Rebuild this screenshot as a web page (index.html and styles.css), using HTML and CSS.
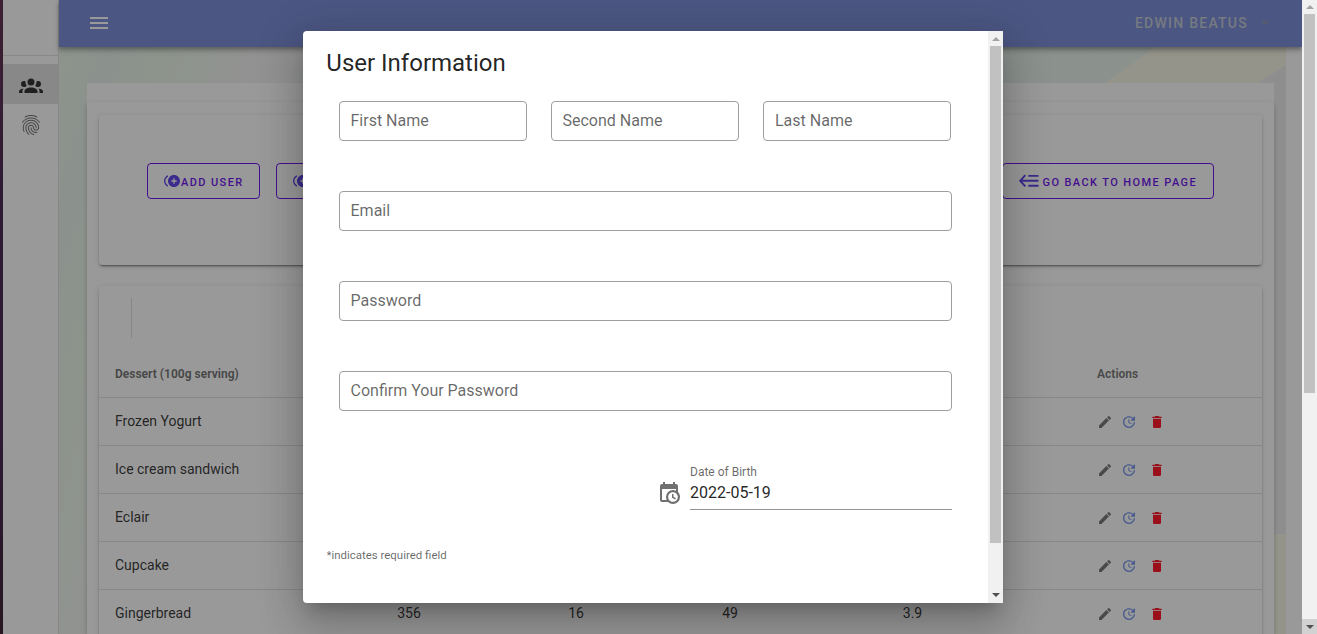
FILE: index.html
```html
<!DOCTYPE html>
<html lang="en">
<head>
<meta charset="utf-8">
<title>User Information</title>
<link rel="stylesheet" href="styles.css">
</head>
<body>
<svg class="defs" aria-hidden="true">
  <symbol id="menu" viewBox="0 0 24 24"><path d="M3,6H21V8H3V6M3,11H21V13H3V11M3,16H21V18H3V16Z"/></symbol>
  <symbol id="group" viewBox="0 0 24 24"><path d="M12,5.5A3.5,3.5 0 0,1 15.5,9A3.5,3.5 0 0,1 12,12.5A3.5,3.5 0 0,1 8.5,9A3.5,3.5 0 0,1 12,5.5M5,8C5.56,8 6.08,8.15 6.53,8.42C6.38,9.85 6.8,11.27 7.66,12.38C7.16,13.34 6.16,14 5,14A3,3 0 0,1 2,11A3,3 0 0,1 5,8M19,8A3,3 0 0,1 22,11A3,3 0 0,1 19,14C17.84,14 16.84,13.34 16.34,12.38C17.2,11.27 17.62,9.85 17.47,8.42C17.92,8.15 18.44,8 19,8M5.5,18.25C5.5,16.18 8.41,14.5 12,14.5C15.59,14.5 18.5,16.18 18.5,18.25V20H5.5V18.25M0,20V18.5C0,17.11 1.89,15.94 4.45,15.6C3.86,16.28 3.5,17.22 3.5,18.25V20H0M24,20H20.5V18.25C20.5,17.22 20.14,16.28 19.55,15.6C22.11,15.94 24,17.11 24,18.5V20Z"/></symbol>
  <symbol id="finger" viewBox="0 0 24 24"><path d="M17.81,4.47C17.73,4.47 17.65,4.45 17.58,4.41C15.66,3.42 14,3 12,3C10.03,3 8.15,3.47 6.44,4.41C6.2,4.54 5.9,4.45 5.76,4.21C5.63,3.97 5.72,3.66 5.96,3.53C7.82,2.5 9.86,2 12,2C14.14,2 16,2.47 18.04,3.5C18.29,3.65 18.38,3.95 18.25,4.19C18.16,4.37 18,4.47 17.81,4.47M3.5,9.72C3.4,9.72 3.3,9.69 3.21,9.63C3,9.47 2.93,9.16 3.09,8.93C4.08,7.53 5.34,6.43 6.84,5.66C10,4.04 14,4.03 17.15,5.65C18.65,6.42 19.91,7.5 20.9,8.9C21.06,9.12 21,9.44 20.78,9.6C20.55,9.76 20.24,9.71 20.08,9.5C19.18,8.22 18.04,7.23 16.69,6.54C13.82,5.07 10.15,5.07 7.29,6.55C5.93,7.25 4.79,8.25 3.89,9.5C3.81,9.65 3.66,9.72 3.5,9.72M9.75,21.79C9.62,21.79 9.5,21.74 9.4,21.64C8.53,20.77 8.06,20.21 7.39,19C6.7,17.77 6.34,16.27 6.34,14.66C6.34,11.69 8.88,9.27 12,9.27C15.12,9.27 17.66,11.69 17.66,14.66A0.5,0.5 0 0,1 17.16,15.16A0.5,0.5 0 0,1 16.66,14.66C16.66,12.24 14.57,10.27 12,10.27C9.43,10.27 7.34,12.24 7.34,14.66C7.34,16.1 7.66,17.43 8.27,18.5C8.91,19.66 9.35,20.15 10.12,20.93C10.31,21.13 10.31,21.44 10.12,21.64C10,21.74 9.88,21.79 9.75,21.79M16.92,19.94C15.73,19.94 14.68,19.64 13.82,19.05C12.33,18.04 11.44,16.4 11.44,14.66A0.5,0.5 0 0,1 11.94,14.16A0.5,0.5 0 0,1 12.44,14.66C12.44,16.07 13.16,17.4 14.38,18.22C15.09,18.7 15.92,18.93 16.92,18.93C17.16,18.93 17.56,18.9 17.96,18.83C18.23,18.78 18.5,18.96 18.54,19.24C18.59,19.5 18.41,19.77 18.13,19.82C17.56,19.93 17.06,19.94 16.92,19.94M14.91,22C14.87,22 14.82,22 14.78,22C13.19,21.54 12.15,20.95 11.06,19.88C9.66,18.5 8.89,16.64 8.89,14.66C8.89,13.04 10.27,11.72 11.97,11.72C13.67,11.72 15.05,13.04 15.05,14.66C15.05,15.73 16,16.6 17.13,16.6C18.28,16.6 19.21,15.73 19.21,14.66C19.21,10.89 15.96,7.83 11.96,7.83C9.12,7.83 6.5,9.41 5.35,11.86C4.96,12.67 4.76,13.62 4.76,14.66C4.76,15.44 4.83,16.67 5.43,18.27C5.53,18.53 5.4,18.82 5.14,18.91C4.88,19 4.59,18.87 4.5,18.62C4,17.31 3.77,16 3.77,14.66C3.77,13.46 4,12.37 4.45,11.42C5.78,8.63 8.73,6.82 11.96,6.82C16.5,6.82 20.21,10.33 20.21,14.65C20.21,16.27 18.83,17.59 17.13,17.59C15.43,17.59 14.05,16.27 14.05,14.65C14.05,13.58 13.12,12.71 11.97,12.71C10.82,12.71 9.89,13.58 9.89,14.65C9.89,16.36 10.55,17.96 11.76,19.16C12.71,20.1 13.62,20.62 15.03,21C15.3,21.08 15.45,21.36 15.38,21.62C15.33,21.85 15.12,22 14.91,22Z"/></symbol>
  <symbol id="pencil" viewBox="0 0 24 24"><path d="M20.71,7.04C21.1,6.65 21.1,6 20.71,5.63L18.37,3.29C18,2.9 17.35,2.9 16.96,3.29L15.12,5.12L18.87,8.87M3,17.25V21H6.75L17.81,9.93L14.06,6.18L3,17.25Z"/></symbol>
  <symbol id="update" viewBox="0 0 24 24"><path d="M21,10.12H14.22L16.96,7.3C14.23,4.6 9.81,4.5 7.08,7.2C4.35,9.91 4.35,14.28 7.08,17C9.81,19.7 14.23,19.7 16.96,17C18.32,15.65 19,14.08 19,12.1H21C21,14.08 20.12,16.65 18.36,18.39C14.85,21.87 9.15,21.87 5.64,18.39C2.14,14.92 2.11,9.28 5.62,5.81C9.13,2.34 14.76,2.34 18.27,5.81L21,3V10.12M12.5,8V12.25L16,14.33L15.28,15.54L11,13V8H12.5Z"/></symbol>
  <symbol id="delete" viewBox="0 0 24 24"><path d="M19,4H15.5L14.5,3H9.5L8.5,4H5V6H19M6,19A2,2 0 0,0 8,21H16A2,2 0 0,0 18,19V7H6V19Z"/></symbol>
  <symbol id="calendar" viewBox="0 0 24 24"><path d="M15,13H16.5V15.82L18.94,17.23L18.19,18.53L15,16.69V13M19,8H5V19H9.67C9.24,18.09 9,17.07 9,16A7,7 0 0,1 16,9C17.07,9 18.09,9.24 19,9.67V8M5,21C3.89,21 3,20.1 3,19V5C3,3.89 3.89,3 5,3H6V1H8V3H16V1H18V3H19A2,2 0 0,1 21,5V11.1C22.24,12.36 23,14.09 23,16A7,7 0 0,1 16,23C14.09,23 12.36,22.24 11.1,21H5M16,11.15A4.85,4.85 0 0,0 11.15,16C11.15,18.68 13.32,20.85 16,20.85A4.85,4.85 0 0,0 20.85,16C20.85,13.32 18.68,11.15 16,11.15Z"/></symbol>
  <symbol id="plus" viewBox="0 0 24 24"><path fill-rule="evenodd" d="M16,8H14V11H11V13H14V16H16V13H19V11H16V8ZM2,12C2,9.21 3.64,6.8 6,5.68V3.5C2.5,4.76 0,8.09 0,12C0,15.91 2.5,19.24 6,20.5V18.32C3.64,17.2 2,14.79 2,12ZM15,3C10.04,3 6,7.04 6,12C6,16.96 10.04,21 15,21C19.96,21 24,16.96 24,12C24,7.04 19.96,3 15,3Z"/></symbol>
  <symbol id="back" viewBox="0 0 20 14"><path d="M6.3 1.2L1.2 6.8L6.3 12.4M1.2 6.8H19.5M9.3 1.9H19.5M9.3 11.7H19.5" fill="none" stroke="currentColor" stroke-width="1.9"/></symbol>
</svg>

<div class="window">
  <div class="edge"></div>
  <nav class="drawer">
    <div class="drawer-head"></div>
    <div class="drawer-item active"><svg class="i24"><use href="#group"/></svg></div>
    <div class="drawer-item"><svg class="i24"><use href="#finger"/></svg></div>
  </nav>
  <div class="main">
    <header class="appbar">
      <svg class="i24"><use href="#menu"/></svg>
      <div class="account">Edwin Beatus<span class="caret"></span></div>
    </header>
    <div class="content">
      <svg class="backdrop" viewBox="0 0 1227 587" preserveAspectRatio="none">
        <path d="M1097 0H1227V587H1000V64L1040 40Z" fill="#f5f6e5"/>
        <path d="M1227 18L1185 45V487H1227Z" fill="#ebebeb"/>
      </svg>
      <div class="sheet">
        <div class="panel">
          <section class="card toolbar">
            <div class="buttons">
              <button class="btn"><svg class="i16"><use href="#plus"/></svg>Add User</button>
              <button class="btn second"><svg class="i16"><use href="#plus"/></svg></button>
            </div>
            <button class="btn home"><svg class="i-back"><use href="#back"/></svg>Go back to home page</button>
          </section>
          <section class="card data">
            <div class="data-top"><span class="vline"></span></div>
            <div class="row head"><span class="name">Dessert (100g serving)</span><span class="act">Actions</span></div>
            <div class="row"><span class="name">Frozen Yogurt</span><span class="act"><svg class="i16"><use href="#pencil"/></svg><svg class="i16 upd"><use href="#update"/></svg><svg class="i16 del"><use href="#delete"/></svg></span></div>
            <div class="row"><span class="name">Ice cream sandwich</span><span class="act"><svg class="i16"><use href="#pencil"/></svg><svg class="i16 upd"><use href="#update"/></svg><svg class="i16 del"><use href="#delete"/></svg></span></div>
            <div class="row"><span class="name">Eclair</span><span class="act"><svg class="i16"><use href="#pencil"/></svg><svg class="i16 upd"><use href="#update"/></svg><svg class="i16 del"><use href="#delete"/></svg></span></div>
            <div class="row"><span class="name">Cupcake</span><span class="act"><svg class="i16"><use href="#pencil"/></svg><svg class="i16 upd"><use href="#update"/></svg><svg class="i16 del"><use href="#delete"/></svg></span></div>
            <div class="row"><span class="name">Gingerbread</span><span>356</span><span>16</span><span>49</span><span>3.9</span><span class="act"><svg class="i16"><use href="#pencil"/></svg><svg class="i16 upd"><use href="#update"/></svg><svg class="i16 del"><use href="#delete"/></svg></span></div>
          </section>
        </div>
      </div>
    </div>
  </div>
  <div class="scroll page-scroll"><span class="cap"><i class="up"></i></span><span class="thumb"></span><span class="cap hot"><i class="down"></i></span></div>

  <div class="scrim"></div>
  <div class="dialog">
    <div class="form">
      <h1 class="title">User Information</h1>
      <div class="names">
        <div class="field">First Name</div>
        <div class="field">Second Name</div>
        <div class="field last">Last Name</div>
      </div>
      <div class="field wide">Email</div>
      <div class="field wide">Password</div>
      <div class="field wide">Confirm Your Password</div>
      <div class="birth">
        <svg class="i24"><use href="#calendar"/></svg>
        <div class="date"><label class="date-label">Date of Birth</label><div class="date-value">2022-05-19</div></div>
      </div>
      <small class="note">*indicates required field</small>
    </div>
    <div class="scroll"><span class="cap"><i class="up"></i></span><span class="thumb"></span><span class="cap"><i class="down"></i></span></div>
  </div>
</div>
</body>
</html>
```
FILE: styles.css
```css
* { box-sizing: border-box; }
body { margin: 0; overflow: hidden; font-family: Roboto, sans-serif; color: rgba(0,0,0,.87); }
svg { display: block; flex: none; fill: currentColor; }
.defs { width: 0; height: 0; position: absolute; }
.i24 { width: 24px; height: 24px; }
.i16 { width: 16px; height: 16px; }
.i-back { width: 20px; height: 14px; margin-right: 3.5px; }

.window { position: relative; display: flex; width: 1317px; height: 634px; overflow: hidden; background: #fff; }
.edge { width: 3px; background: linear-gradient(#56213f, #3b1646 30%, #391343 70%, #2b1022); }
.drawer { width: 56px; border-right: 1px solid #e0e0e0; background: #fff; }
.drawer-head { height: 56px; margin-bottom: 8px; border-bottom: 1px solid #e0e0e0; }
.drawer-item { display: flex; align-items: center; height: 40px; padding: 2px 0 0 16px; color: rgba(0,0,0,.6); }
.drawer-item.active { background: #e0e0e0; color: #1e1e1e; }

.main { width: 1243px; display: flex; flex-direction: column; }
.appbar { position: relative; z-index: 1; height: 47px; flex: none; display: flex; align-items: center; justify-content: space-between; padding: 0 33px 1px 28px; background: #6f83d5; color: #fff; box-shadow: 0 2px 4px rgba(0,0,0,.3), 0 4px 6px rgba(0,0,0,.16); }
.account { display: flex; align-items: center; gap: 13px; font-size: 14px; font-weight: 500; letter-spacing: 1.25px; text-transform: uppercase; color: #bec6d3; }
.caret { border: 4px solid transparent; border-top-color: #8590ae; border-bottom: 0; }

.content { position: relative; flex: 1; min-height: 0; padding: 36px 28px 0; background: linear-gradient(105deg, #e9f6e7 0, #e6f0e9 50px, #e9f6e7 105px, #f2f2f2 200px, #e8f4ea 340px, #e6f2ea 75%, #e8f4ea) no-repeat 0 0 / 1227px 100%; }
.backdrop { position: absolute; left: 0; top: 0; width: 1227px; height: 587px; }
.sheet { position: relative; height: 551px; padding-top: 19px; background: #fff; }
.panel { height: 532px; padding: 13px 12px 0; border-radius: 4px 4px 0 0; background: #fff; box-shadow: 0 2px 5px rgba(0,0,0,.25); clip-path: inset(-2px -5px 0 -5px); }
.card { border-radius: 4px; background: #fff; box-shadow: 0 3px 1px -2px rgba(0,0,0,.3), 0 2px 2px rgba(0,0,0,.18), 0 1px 5px rgba(0,0,0,.16); }
.toolbar { display: flex; justify-content: space-between; height: 150px; padding: 48px 48px 0; margin-bottom: 21px; }
.buttons { display: flex; gap: 16px; }
.btn { display: flex; align-items: center; height: 36px; padding: 2px 15px 0 16px; border: 1px solid #6200ea; border-radius: 4px; background: none; color: #6200ea; font: 500 11px Roboto, sans-serif; letter-spacing: 1.4px; text-transform: uppercase; white-space: nowrap; }
.btn svg { margin-top: -2px; color: #5035e8; }
.btn .i16 { margin-right: 1px; }
.second { width: 113px; }
.home { padding-right: 16px; }

.data { height: 400px; }
.data-top { height: 64px; padding: 12px 32px; }
.vline { display: block; width: 1px; height: 40px; background: #dcdcdc; }
.row { display: grid; grid-template-columns: 240px 140px 194px 114px 251px 43px 181px; align-items: center; height: 48px; border-bottom: 1px solid #e0e0e0; font-size: 14px; text-align: center; }
.row > span { padding-bottom: 2px; }
.row .name { padding-left: 16px; text-align: left; }
.row .act { grid-column: 7; display: flex; padding: 0 0 0 16px; color: rgba(0,0,0,.58); }
.row.head { font-size: 12px; font-weight: 700; color: rgba(0,0,0,.6); }
.row.head .name { padding-bottom: 0; }
.row .upd { margin-left: 8px; color: #6b8eea; }
.row .del { margin-left: 12px; color: #ff0015; }

.scroll { display: flex; flex-direction: column; width: 15px; height: 100%; background: #f1f1f1; }
.cap { display: flex; align-items: center; justify-content: center; height: 15px; flex: none; }
.cap i { border: 4px solid transparent; }
.cap .up { border-top: 0; border-bottom-color: #a3a3a3; }
.cap .down { border-bottom: 0; border-top-color: #505050; }
.dialog .cap:last-child { padding-bottom: 1px; }
.hot { background: #d2d2d2; }
.thumb { width: 11px; height: 497px; margin: 0 2px auto; background: #c1c1c1; }
.page-scroll { position: relative; z-index: 3; }
.page-scroll .thumb { height: 379px; }
.page-scroll .cap:first-child { height: 14px; }

.scrim { position: absolute; z-index: 2; inset: 0 15px 0 0; background: rgba(33,33,33,.46); }
.dialog { position: absolute; z-index: 4; left: 303px; top: 31px; width: 700px; height: 572px; display: flex; border-radius: 4px 0 0 4px; background: #fff; box-shadow: 0 11px 15px -7px rgba(0,0,0,.2), 0 24px 38px 3px rgba(0,0,0,.14), 0 9px 46px 8px rgba(0,0,0,.12); }
.form { width: 685px; padding: 16px 36px 0; }
.title { margin: 0 0 22px -12.7px; font-size: 24px; font-weight: 400; line-height: 32px; }
.names { display: grid; grid-template-columns: repeat(3, 188px); gap: 24px; margin-bottom: 50px; }
.field { height: 40px; padding-left: 10.5px; border: 1px solid #9e9e9e; border-radius: 4px; font-size: 16px; line-height: 37px; color: rgba(0,0,0,.6); }
.last { padding-left: 11px; }
.wide { margin-bottom: 50px; }
.birth { display: flex; width: 295px; margin: 0 0 0 auto; padding-top: 4px; gap: 9px; }
.birth svg { margin-top: 16px; color: rgba(0,0,0,.56); }
.date { flex: 1; height: 45px; border-bottom: 1px solid #949494; }
.date-label { display: block; font-size: 12px; line-height: 14px; color: rgba(0,0,0,.6); }
.date-value { font-size: 16px; line-height: 27px; }
.note { display: block; margin: 38px 0 0 -12.5px; font-size: 11.45px; line-height: 14px; color: rgba(0,0,0,.6); }
```
